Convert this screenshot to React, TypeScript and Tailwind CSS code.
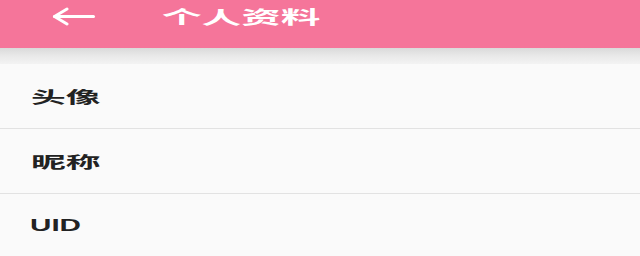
const rows = [
  { label: "头像", cjk: true },
  { label: "昵称", cjk: true },
  { label: "UID", cjk: false },
];

const ProfilePage = () => {
  return (
    <section className="w-[640px] h-[256px] overflow-hidden bg-[#fafafa] font-['Noto_Sans','Noto_Sans_CJK_SC',sans-serif]">
      <header className="h-[48px] bg-[#f5759a] flex items-start pt-[7px]">
        <button className="ml-[52px] w-[44px] h-[19px] text-white">
          <svg viewBox="0 0 44 19" width="44" height="19" fill="none" stroke="currentColor" strokeWidth="3" strokeLinecap="round" strokeLinejoin="round">
            <path d="M2.5 9.5 H41.5" />
            <path d="M15 2 L2.5 9.5 L15 17" />
          </svg>
        </button>
        <h1 className="ml-[66px] mt-[1px] text-white text-[18px] leading-[18px] font-semibold inline-block origin-left scale-x-[2.2]">
          个人资料
        </h1>
      </header>

      <div className="h-[16px] bg-gradient-to-b from-[#dadada] via-[#e9e9e9] to-[#f3f3f3]" />

      <ul>
        {rows.map((row) => (
          <li
            key={row.label}
            className="h-[65px] border-b border-[#e2e2e2] flex items-center px-[30px]"
          >
            <span
              className={
                row.cjk
                  ? "inline-block origin-left scale-x-[2.17] ml-[1px] text-[16px] leading-[16px] font-semibold text-[#222222] font-['Noto_Sans_CJK_SC',sans-serif]"
                  : "inline-block origin-left scale-x-[1.85] text-[16px] leading-[16px] font-semibold text-[#222222] font-['Liberation_Sans',sans-serif]"
              }
            >
              {row.label}
            </span>
          </li>
        ))}
      </ul>
    </section>
  );
};

export default function App() {
  return <ProfilePage />;
}
